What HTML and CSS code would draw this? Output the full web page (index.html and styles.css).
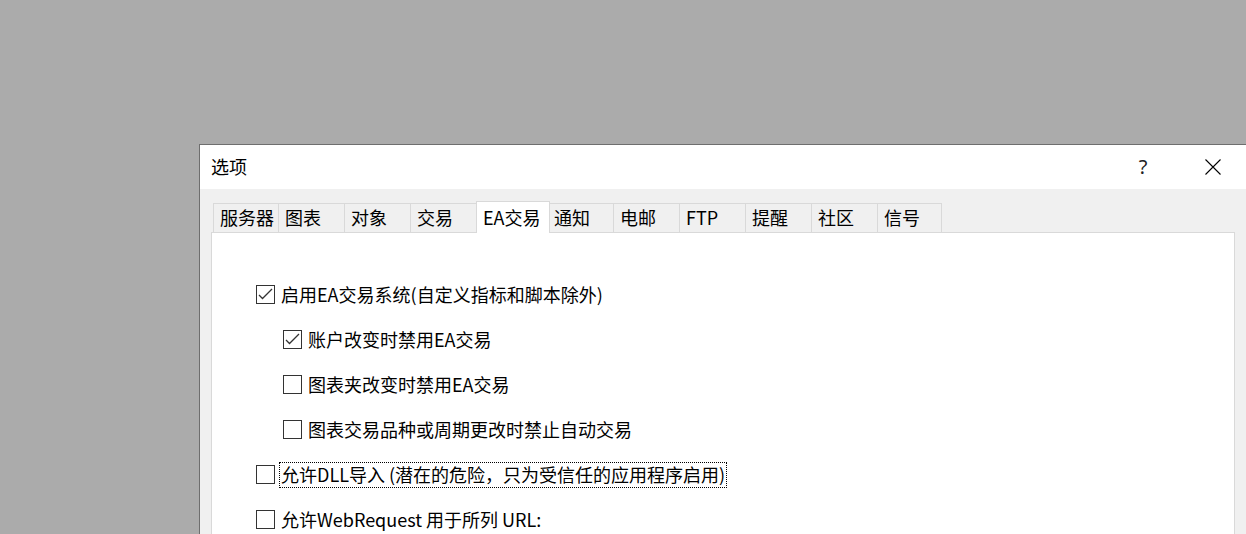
FILE: index.html
```html
<!DOCTYPE html>
<html lang="zh-CN">
<head>
    <meta charset="UTF-8">
    <title>选项</title>
    <link rel="stylesheet" href="styles.css">
</head>
<body>
    <div class="dialog">
        <div class="titlebar">
            <span class="title">选项</span>
            <span class="cap-btn help">?</span>
            <span class="cap-btn close">
                <svg width="16" height="16" viewBox="0 0 16 16">
                    <path d="M0.5 0.5 L15.5 15.5 M15.5 0.5 L0.5 15.5" stroke="#000" stroke-width="1.1" fill="none"/>
                </svg>
            </span>
        </div>

        <div class="dialog-body">
            <div class="tabs">
                <div class="tab tab-first">服务器</div>
                <div class="tab">图表</div>
                <div class="tab">对象</div>
                <div class="tab">交易</div>
                <div class="tab active">EA交易</div>
                <div class="tab">通知</div>
                <div class="tab">电邮</div>
                <div class="tab">FTP</div>
                <div class="tab">提醒</div>
                <div class="tab">社区</div>
                <div class="tab tab-last">信号</div>
            </div>

            <div class="panel">
                <div class="opt">
                    <span class="check">
                        <svg width="19" height="19" viewBox="0 0 19 19">
                            <rect x="0.5" y="0.5" width="18" height="18" fill="#fff" stroke="#333"/>
                            <polyline points="3,10 6.5,13.5 16,4" fill="none" stroke="#333" stroke-width="1.3"/>
                        </svg>
                    </span>
                    <span class="label">启用EA交易系统(自定义指标和脚本除外)</span>
                </div>
                <div class="opt sub">
                    <span class="check">
                        <svg width="19" height="19" viewBox="0 0 19 19">
                            <rect x="0.5" y="0.5" width="18" height="18" fill="#fff" stroke="#333"/>
                            <polyline points="3,10 6.5,13.5 16,4" fill="none" stroke="#333" stroke-width="1.3"/>
                        </svg>
                    </span>
                    <span class="label">账户改变时禁用EA交易</span>
                </div>
                <div class="opt sub">
                    <span class="check">
                        <svg width="19" height="19" viewBox="0 0 19 19">
                            <rect x="0.5" y="0.5" width="18" height="18" fill="#fff" stroke="#333"/>
                        </svg>
                    </span>
                    <span class="label">图表夹改变时禁用EA交易</span>
                </div>
                <div class="opt sub">
                    <span class="check">
                        <svg width="19" height="19" viewBox="0 0 19 19">
                            <rect x="0.5" y="0.5" width="18" height="18" fill="#fff" stroke="#333"/>
                        </svg>
                    </span>
                    <span class="label">图表交易品种或周期更改时禁止自动交易</span>
                </div>
                <div class="opt">
                    <span class="check">
                        <svg width="19" height="19" viewBox="0 0 19 19">
                            <rect x="0.5" y="0.5" width="18" height="18" fill="#fff" stroke="#333"/>
                        </svg>
                    </span>
                    <span class="label focused">允许DLL导入 (潜在的危险，只为受信任的应用程序启用)</span>
                </div>
                <div class="opt">
                    <span class="check">
                        <svg width="19" height="19" viewBox="0 0 19 19">
                            <rect x="0.5" y="0.5" width="18" height="18" fill="#fff" stroke="#333"/>
                        </svg>
                    </span>
                    <span class="label">允许WebRequest 用于所列 URL:</span>
                </div>
            </div>
        </div>
    </div>
</body>
</html>
```

FILE: styles.css
```css
* {
    margin: 0;
    padding: 0;
    box-sizing: border-box;
}

html, body {
    height: 534px;
    overflow: hidden;
}

body {
    background-color: #ababab;
    font-family: "Noto Sans CJK SC", "Noto Sans", sans-serif;
    font-size: 18px;
    color: #000;
    padding: 144px 0 0 199px;
}

.dialog {
    width: 1050px;
    height: 390px;
    border: 1px solid #6e6e6e;
    border-bottom: none;
    background-color: #f0f0f0;
    overflow: hidden;
}

/* title bar */

.titlebar {
    height: 44px;
    background: #fff;
    display: flex;
    align-items: center;
    padding-left: 11px;
}

.title {
    flex: 1;
    line-height: 24px;
    padding-bottom: 2px;
}

.cap-btn {
    width: 70px;
    height: 44px;
    display: flex;
    align-items: center;
    justify-content: center;
}

.cap-btn.help {
    font-family: "Noto Sans", sans-serif;
    font-size: 20px;
    color: #222;
    padding-bottom: 2px;
}

/* tabs */

.dialog-body {
    padding: 12px 13px 0 11px;
}

.tabs {
    display: flex;
    align-items: flex-end;
    height: 31px;
    margin-left: 2px;
}

.tab {
    width: 67px;
    height: 29px;
    margin-left: -1px;
    border: 1px solid #d9d9d9;
    border-bottom: none;
    padding-left: 6px;
    line-height: 27px;
    white-space: nowrap;
}

.tab-first {
    width: 66px;
    margin-left: 0;
}

.tab-last {
    width: 65px;
}

.tab.active {
    width: 74px;
    height: 32px;
    margin-bottom: -1px;
    margin-right: -2px;
    line-height: 30px;
    background: #fff;
    position: relative;
    z-index: 1;
}

/* content */

.panel {
    background: #fff;
    border: 1px solid #d9d9d9;
    height: 400px;
    padding: 39px 0 0 44px;
}

.opt {
    display: flex;
    align-items: center;
    height: 45px;
}

.opt.sub {
    margin-left: 27px;
}

.check {
    width: 19px;
    height: 19px;
    display: block;
}

.check svg {
    display: block;
}

.label {
    margin-left: 4px;
    border: 1px dotted transparent;
    padding: 0 1px 2px;
    line-height: 22px;
    white-space: nowrap;
}

.label.focused {
    border-color: #000;
}
```
